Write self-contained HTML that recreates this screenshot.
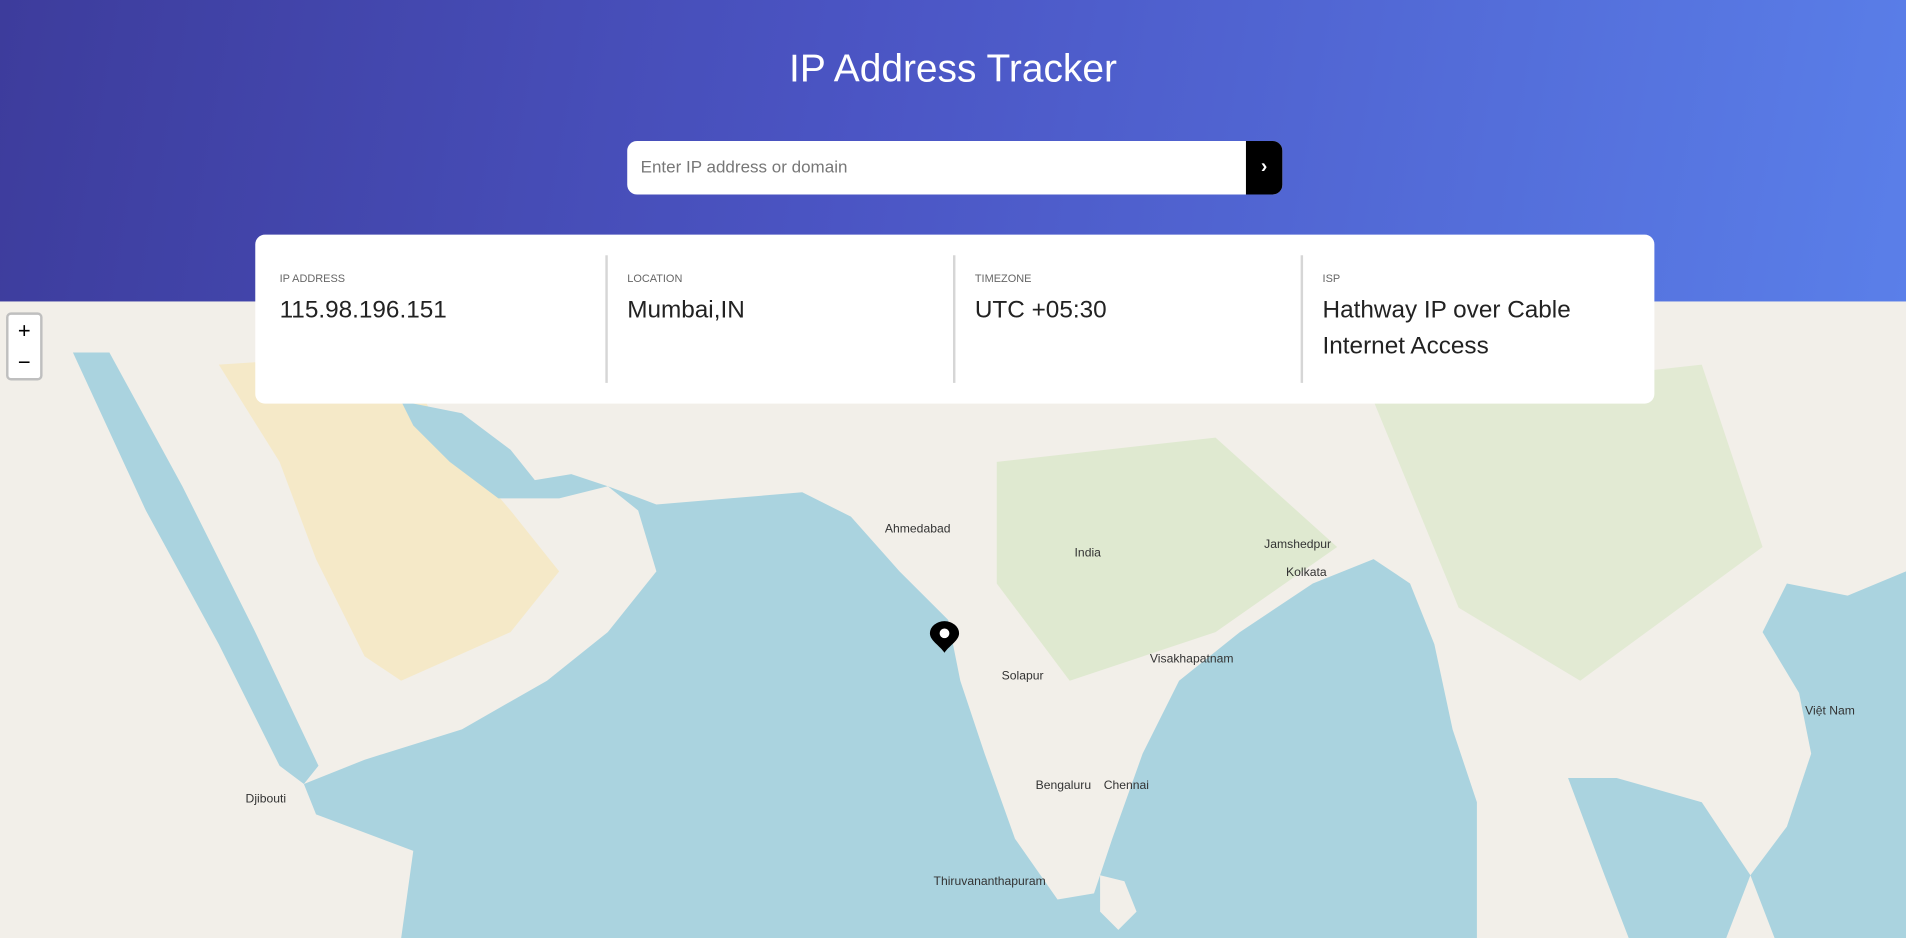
<!DOCTYPE html>
<html><head><meta charset="utf-8"><style>
html,body{margin:0;padding:0;width:1906px;height:938px;overflow:hidden;background:#aad3df}
#w{position:absolute;left:0;top:0;width:1568px;height:772px;transform:scale(1.21556);transform-origin:0 0;font-family:"Liberation Sans","Noto Sans CJK SC",sans-serif}
#hdr{position:absolute;left:0;top:0;width:1568px;height:248px;background:linear-gradient(100deg,#3d3c9c 0%,#4b55c4 45%,#5a7fe9 100%)}
h1{position:absolute;top:38px;left:0;width:100%;text-align:center;margin:0;color:#fff;font-weight:400;font-size:32px}
#sb{position:absolute;left:516px;top:116px;width:539px;height:44px;border-radius:8px;overflow:hidden;background:#fff}
#sb span{position:absolute;left:11px;top:13px;font-size:15px;color:#777}
#sb b{position:absolute;right:0;top:0;width:30px;height:44px;background:#000;color:#fff;text-align:center;line-height:44px;font-size:16px}
#card{position:absolute;left:210px;top:193px;width:1151px;height:139px;background:#fff;border-radius:8px;z-index:3}
.c{position:absolute;top:17px;height:105px;padding-left:20px}
.c+.c{border-left:2px solid #d6d6d6;padding-left:16px}
.l{font-size:9px;color:#666;margin-top:14px}
.v{font-size:20px;color:#222;margin-top:6px;line-height:30px;font-weight:500}
#zm{position:absolute;left:5px;top:257px;width:26px;height:52px;background:#fff;border:2px solid rgba(0,0,0,.25);border-radius:4px;z-index:2;font-size:18px;text-align:center;line-height:26px}
.t{position:absolute;font-size:10px;color:#333}
</style></head><body><div id="w">
<svg style="position:absolute;left:0;top:0" width="1568" height="772" viewBox="0 0 1568 772">
<rect width="1568" height="772" fill="#f2efe9"/>
<path d="M180 300 L330 290 L360 350 L420 420 L460 470 L420 520 L330 560 L300 540 L260 460 L230 380Z" fill="#f5e9c8"/>
<path d="M820 380 L1000 360 L1100 450 L1000 520 L880 560 L820 480Z" fill="#dfe9d0"/>
<path d="M1130 330 L1400 300 L1450 450 L1300 560 L1200 500Z" fill="#e2ead3"/>
<g fill="#aad3df">
<path d="M250 645 L300 625 L380 600 L450 560 L500 520 L540 470 L525 420 L500 400 L540 415 L600 410 L660 405 L700 425 L740 470 L780 510 L790 560 L810 620 L835 690 L870 740 L900 735 L915 690 L940 620 L970 560 L1020 520 L1080 480 L1130 460 L1160 480 L1180 530 L1195 600 L1215 660 L1215 772 L330 772 L340 700 L260 670Z"/>
<path d="M60 290 L90 290 L150 400 L210 520 L262 630 L250 645 L230 630 L180 530 L120 420Z"/>
<path d="M330 330 L380 340 L420 370 L440 395 L470 390 L500 400 L460 410 L410 410 L370 380 L340 350Z"/>
<path d="M1290 640 L1330 640 L1400 660 L1440 720 L1420 772 L1340 772 L1320 720Z"/>
<path d="M1568 470 L1520 490 L1470 480 L1450 520 L1480 570 L1490 620 L1470 680 L1440 720 L1460 772 L1568 772Z"/>
</g>
<path d="M905 720 L925 725 L935 750 L920 765 L905 750Z" fill="#f2efe9"/>
</svg>
<div class="t" style="left:884px;top:450px">India</div>
<div class="t" style="left:728px;top:430px">Ahmedabad</div>
<div class="t" style="left:1040px;top:443px">Jamshedpur</div>
<div class="t" style="left:1058px;top:466px">Kolkata</div>
<div class="t" style="left:946px;top:537px">Visakhapatnam</div>
<div class="t" style="left:824px;top:551px">Solapur</div>
<div class="t" style="left:852px;top:641px">Bengaluru</div>
<div class="t" style="left:908px;top:641px">Chennai</div>
<div class="t" style="left:768px;top:720px">Thiruvananthapuram</div>
<div class="t" style="left:202px;top:652px">Djibouti</div>
<div class="t" style="left:1485px;top:580px">Việt Nam</div>
<svg style="position:absolute;left:764px;top:510px" width="26" height="28" viewBox="0 0 26 28"><path d="M13 27 C9 21 1 17 1 11 A12 10 0 0 1 25 11 C25 17 17 21 13 27Z" fill="#000"/><circle cx="13" cy="11" r="4" fill="#fff"/></svg>
<div id="zm">+<br>−</div>
<div id="hdr"><h1>IP Address Tracker</h1>
<div id="sb"><span style="font-size:14px">Enter IP address or domain</span><b>›</b></div></div>
<div id="card">
<div class="c" style="left:0;width:266px"><div class="l">IP ADDRESS</div><div class="v">115.98.196.151</div></div>
<div class="c" style="left:288px;width:268px"><div class="l">LOCATION</div><div class="v">Mumbai,IN</div></div>
<div class="c" style="left:574px;width:268px"><div class="l">TIMEZONE</div><div class="v">UTC +05:30</div></div>
<div class="c" style="left:860px;width:264px"><div class="l">ISP</div><div class="v">Hathway IP over Cable Internet Access</div></div>
</div>
</div></body></html>
